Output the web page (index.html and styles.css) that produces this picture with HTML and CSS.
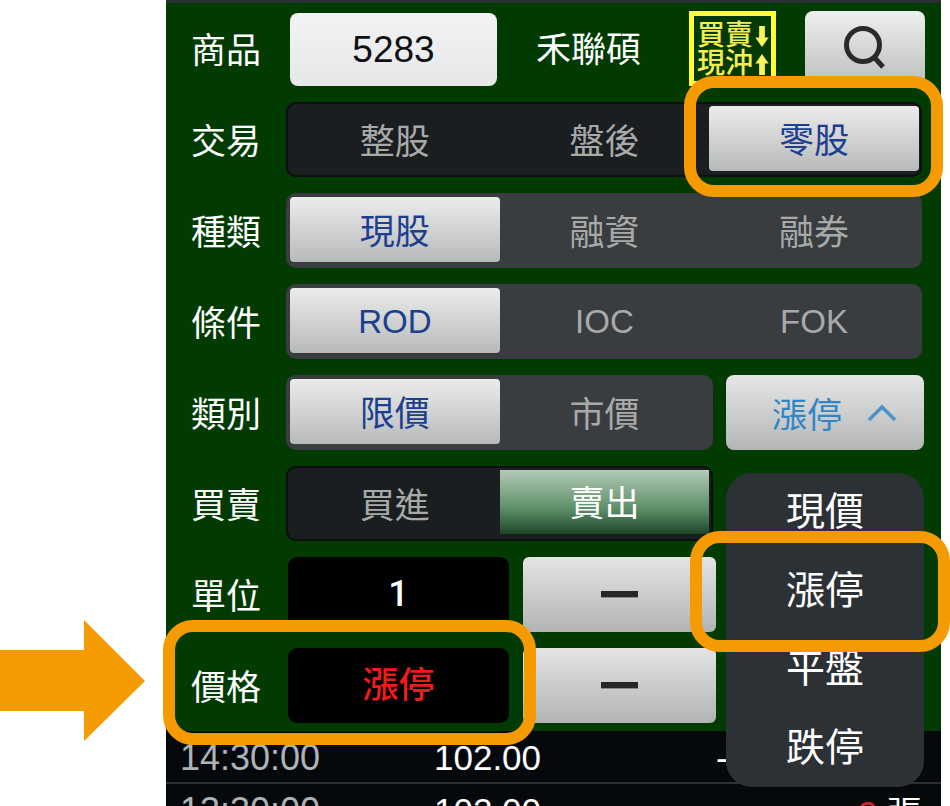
FILE: index.html
```html
<!DOCTYPE html>
<html lang="zh-Hant">
<head>
<meta charset="utf-8">
<title>零股下單</title>
<link rel="stylesheet" href="styles.css">
</head>
<body>
<div class="page">
  <main class="app">
    <div class="topstrip"></div>
    <section class="form">
      <div class="row">
        <span class="label">商品</span>
        <div class="code">5283</div>
        <span class="name">禾聯碩</span>
        <div class="badge">
          <div class="badge-line"><span>買賣</span><svg class="badge-arrow" viewBox="0 0 14 24"><path d="M4 1h6v12h4L7 23 0 13h4z"/></svg></div>
          <div class="badge-line"><span>現沖</span><svg class="badge-arrow" viewBox="0 0 14 24"><path d="M4 23h6V11h4L7 1 0 11h4z"/></svg></div>
        </div>
        <button class="search"><svg class="search-icon" viewBox="0 0 44 44"><circle cx="20" cy="19" r="16.5"/><path d="M31 31l9 10"/></svg></button>
      </div>
      <div class="row">
        <span class="label">交易</span>
        <div class="seg seg-dark">
          <span class="opt">整股</span><span class="opt">盤後</span><span class="opt on">零股</span>
        </div>
      </div>
      <div class="row">
        <span class="label">種類</span>
        <div class="seg">
          <span class="opt on">現股</span><span class="opt">融資</span><span class="opt">融券</span>
        </div>
      </div>
      <div class="row">
        <span class="label">條件</span>
        <div class="seg">
          <span class="opt on latin">ROD</span><span class="opt latin">IOC</span><span class="opt latin">FOK</span>
        </div>
      </div>
      <div class="row">
        <span class="label">類別</span>
        <div class="seg seg-short">
          <span class="opt on">限價</span><span class="opt">市價</span>
        </div>
        <button class="pick"><span>漲停</span><svg class="chev" viewBox="0 0 30 18"><path d="M2 16L15 3l13 13"/></svg></button>
      </div>
      <div class="row">
        <span class="label">買賣</span>
        <div class="seg seg-dark seg-short">
          <span class="opt">買進</span><span class="opt sell">賣出</span>
        </div>
      </div>
      <div class="row">
        <span class="label">單位</span>
        <div class="field field-qty">1</div>
        <button class="step"><span class="dash"></span></button>
      </div>
      <div class="row">
        <span class="label">價格</span>
        <div class="field field-price">漲停</div>
        <button class="step"><span class="dash"></span></button>
      </div>
    </section>
    <section class="quotes">
      <div class="quote"><span class="q-time">14:30:00</span><span class="q-price">102.00</span><span class="q-none">-</span></div>
      <div class="quote"><span class="q-time">13:30:00</span><span class="q-price">102.00</span><span class="q-vol"><em>2</em> 張</span></div>
    </section>
  </main>

  <ul class="menu">
    <li>現價</li>
    <li>漲停</li>
    <li>平盤</li>
    <li>跌停</li>
  </ul>

  <div class="mark mark-odd"></div>
  <div class="mark mark-limit"></div>
  <div class="mark mark-price"></div>
  <svg class="pointer" viewBox="0 0 145 121"><path d="M0 30h84V0l61 61-61 60V91H0z"/></svg>
</div>
</body>
</html>
```
FILE: styles.css
```css
* { box-sizing: border-box; }
html, body { margin: 0; padding: 0; background: #fff; }
body { font-family: "Liberation Sans", "Noto Sans CJK TC", sans-serif; }
.page { position: relative; width: 950px; height: 806px; overflow: hidden; padding-left: 166px; }
.app { width: 775px; height: 806px; background: #05090c; }
.topstrip { height: 3px; background: #2a2f30; }
.form { background: #023b02; padding: 8px 19px 8px 25px; display: flex; flex-direction: column; gap: 16px; height: 728px; }
.row { display: flex; align-items: flex-start; height: 75px; }
.label { width: 95px; flex: none; height: 75px; line-height: 79px; color: #fff; font-size: 35px; }

.code { width: 207px; height: 73px; margin: 2px 0 0 4px; flex: none; border-radius: 8px; background: linear-gradient(#f3f3f5, #e6e7e9); color: #111; font-size: 37px; line-height: 73px; text-align: center; }
.name { margin-left: 39px; width: 153px; flex: none; color: #fff; font-size: 35px; line-height: 77px; }
.badge { width: 87px; height: 75px; flex: none; border: 5px solid #ffff2e; background: #033a06; padding: 6px 0 0 3px; }
.badge-line { display: flex; align-items: center; height: 28px; color: #f6ee4e; font-size: 28px; font-weight: 500; line-height: 28px; }
.badge-arrow { width: 14px; height: 23px; margin-left: 2px; fill: #fbf35c; }
.search { width: 120px; height: 75px; margin-left: 29px; flex: none; padding: 0; border: 0; border-radius: 8px; background: linear-gradient(#eef0f0, #bcbebe); display: flex; align-items: center; justify-content: center; }
.search-icon { width: 44px; height: 44px; margin-top: -2px; fill: none; stroke: #2a2a2a; stroke-width: 5; }

.seg { width: 636px; height: 75px; flex: none; display: flex; padding: 4px; border-radius: 10px; background: #3a3d3f; }
.seg-dark { background: #1b1e20; box-shadow: inset 0 0 0 2px #0c0e0f; }
.seg-short { width: 427px; }
.opt { width: 209.6px; height: 65px; flex: none; border-radius: 4px; text-align: center; color: #a8aaaa; font-size: 35px; line-height: 71px; }
.opt.on { background: linear-gradient(#ececec, #b8b9b9); color: #1c3f8f; line-height: 69px; }
.opt.sell { height: 64px; border-radius: 0; background: linear-gradient(#b3cbb6, #5e8f69 60%, #1c4628); color: #fff; line-height: 67px; }
.opt.latin { font-size: 33px; line-height: 68px; }

.pick { width: 198px; height: 75px; margin-left: 13px; flex: none; padding: 0 0 0 19px; border: 0; border-radius: 8px; background: linear-gradient(#e6e6e6, #b4b6b6); display: flex; align-items: center; justify-content: center; gap: 25px; color: #2f86c5; font: 35px "Liberation Sans", "Noto Sans CJK TC", sans-serif; }
.chev { width: 30px; height: 18px; fill: none; stroke: #4a94c8; stroke-width: 3.5; }

.field { width: 221px; height: 75px; margin-left: 2px; flex: none; border-radius: 9px; background: #000; text-align: center; line-height: 75px; }
.field-qty { color: #fff; font-family: Roboto, sans-serif; font-size: 36px; font-weight: 500; }
.field-price { color: #f01c1c; font-size: 36px; font-weight: 500; line-height: 76px; }
.step { width: 193px; height: 75px; margin-left: 14px; flex: none; padding: 0; border: 0; border-radius: 6px; background: linear-gradient(#e4e4e4, #b2b4b4); display: flex; align-items: center; justify-content: center; }
.dash { width: 37px; height: 7px; background: #262626; border-bottom: 1px solid #8a8a8a; }

.quotes { color: #fff; }
.quote { display: flex; align-items: center; height: 53px; padding: 2px 0 0 14px; font-size: 35px; border-bottom: 2px solid #2c3034; }
.q-time { width: 254px; color: #aeb4b6; font-size: 36px; }
.q-price { width: 282px; }
.q-none { flex: none; }
.q-vol { width: 206px; text-align: right; }
.q-vol em { font-style: normal; color: #e0201c; }

.menu { position: absolute; left: 726px; top: 473px; width: 198px; height: 314px; margin: 0; padding: 0; list-style: none; border-radius: 26px; background: #2b3134; }
.menu li { height: 78.5px; line-height: 78px; text-align: center; color: #fff; font-size: 39px; }

.mark { position: absolute; border: 12px solid #f59a00; border-radius: 30px; }
.mark-odd { left: 684px; top: 76px; width: 259px; height: 121px; }
.mark-limit { left: 690px; top: 531px; width: 260px; height: 121px; }
.mark-price { left: 163px; top: 620px; width: 373px; height: 125px; }
.pointer { position: absolute; left: 0; top: 620px; width: 145px; height: 121px; fill: #f59a00; }
```
